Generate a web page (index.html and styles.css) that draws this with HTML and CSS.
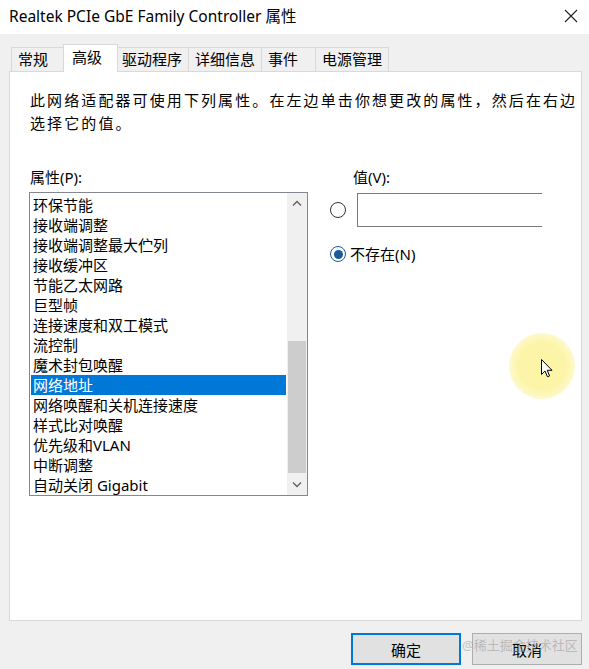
FILE: index.html
```
<!DOCTYPE html>
<html>
<head>
<meta charset="utf-8">
<title>Realtek PCIe GbE Family Controller 属性</title>
<link rel="stylesheet" href="styles.css">
</head>
<body>
<div class="window">
	<div class="titlebar">
		<span class="title">Realtek PCIe GbE Family Controller 属性</span>
		<svg class="close" width="14" height="14" viewBox="0 0 14 14"><path d="M1 1 L13 13 M13 1 L1 13" stroke="#222" stroke-width="1.1" fill="none"/></svg>
	</div>

	<div class="tabs">
		<div class="tab">常规</div>
		<div class="tab selected">高级</div>
		<div class="tab">驱动程序</div>
		<div class="tab">详细信息</div>
		<div class="tab">事件</div>
		<div class="tab">电源管理</div>
	</div>

	<div class="panel">
		<p class="desc">此网络适配器可使用下列属性。在左边单击你想更改的属性，然后在右边<br>选择它的值。</p>

		<div class="props">
			<div class="col-left">
				<div class="label">属性(P):</div>
				<div class="listbox">
					<ul class="items">
						<li>环保节能</li>
						<li>接收端调整</li>
						<li>接收端调整最大伫列</li>
						<li>接收缓冲区</li>
						<li>节能乙太网路</li>
						<li>巨型帧</li>
						<li>连接速度和双工模式</li>
						<li>流控制</li>
						<li>魔术封包唤醒</li>
						<li class="active">网络地址</li>
						<li>网络唤醒和关机连接速度</li>
						<li>样式比对唤醒</li>
						<li>优先级和VLAN</li>
						<li>中断调整</li>
						<li>自动关闭 Gigabit</li>
					</ul>
					<div class="scrollbar">
						<div class="arrow"><svg width="10" height="6" viewBox="0 0 10 6"><path d="M1 5.5 L5 1.5 L9 5.5" stroke="#606060" stroke-width="1.3" fill="none"/></svg></div>
						<div class="track"><div class="thumb"></div></div>
						<div class="arrow"><svg width="10" height="6" viewBox="0 0 10 6"><path d="M1 0.5 L5 4.5 L9 0.5" stroke="#606060" stroke-width="1.3" fill="none"/></svg></div>
					</div>
				</div>
			</div>

			<div class="col-right">
				<div class="label value-label">值(V):</div>
				<div class="value-row">
					<span class="radio"></span>
					<div class="textbox"></div>
				</div>
				<div class="radio-row">
					<span class="radio checked"></span>
					<span>不存在(N)</span>
				</div>
			</div>
		</div>
	</div>

	<div class="buttons">
		<button class="btn default">确定</button>
		<button class="btn">取消</button>
	</div>

	<!-- screen recorder overlays -->
	<div class="glow"></div>
	<svg class="cursor" width="12" height="19" viewBox="0 0 12 19"><path d="M0.5 0.5 L0.5 15.5 L4 12 L6.5 17.8 L8.6 16.9 L6.2 11.3 L11 11.3 Z" fill="#fff" stroke="#000" stroke-width="1"/></svg>
	<div class="watermark">@稀土掘金技术社区</div>
</div>
</body>
</html>
```

FILE: styles.css
```
	body{
		margin:0;
		background:#f0f0f0;
		font-family:"Noto Sans", "Noto Sans CJK SC", sans-serif;
		font-size:15px;
		color:#000;
	}
	.window{
		position:relative;
		width:589px;
		height:669px;
		overflow:hidden;
	}
	.titlebar{
		height:34px;
		background:#fff;
		display:flex;
		align-items:center;
		justify-content:space-between;
		padding:0 11px 2px 9px;
		box-sizing:border-box;
	}
	.title{
		font-size:15.5px;
		line-height:20px;
	}
	.close{
		display:block;
	}

	/* tab strip */
	.tabs{
		display:flex;
		align-items:flex-end;
		height:27px;
		margin-top:10px;
		padding-left:11px;
		position:relative;
		z-index:1;
	}
	.tab{
		height:24px;
		line-height:23px;
		min-width:55px;
		padding:0 6px;
		box-sizing:border-box;
		border:1px solid #d9d9d9;
		border-bottom:none;
		margin-left:-1px;
		background:#f0f0f0;
	}
	.tab:first-child{
		margin-left:0;
	}
	.tab.selected{
		height:28px;
		margin:0 -2px -1px -3px;
		padding:0 8px;
		line-height:25px;
		background:#fff;
		position:relative;
		z-index:2;
	}

	/* white property page */
	.panel{
		margin:0 7px 0 9px;
		height:550px;
		box-sizing:border-box;
		border:1px solid #d9d9d9;
		background:#fff;
		padding:17px 0 0 19px;
	}
	.desc{
		margin:0 0 0 1px;
		line-height:23px;
		letter-spacing:2.1px;
		white-space:nowrap;
	}
	.props{
		display:flex;
		gap:22px;
		margin-top:32px;
	}
	.label{
		line-height:20px;
		margin-left:1px;
	}
	.col-left{
		width:279px;
	}

	/* list box */
	.listbox{
		margin-top:5px;
		height:304px;
		box-sizing:border-box;
		border:1px solid #828790;
		display:flex;
	}
	.items{
		list-style:none;
		margin:0;
		padding:2px 1px 0 1px;
		flex:1;
	}
	.items li{
		height:20px;
		line-height:20px;
		padding-left:2px;
		white-space:nowrap;
	}
	.items li.active{
		background:#0078d7;
		color:#fff;
	}
	.scrollbar{
		width:20px;
		background:#f0f0f0;
		display:flex;
		flex-direction:column;
	}
	.arrow{
		height:20px;
		display:flex;
		align-items:center;
		justify-content:center;
	}
	.track{
		flex:1;
	}
	.thumb{
		margin:128px 1px 0 1px;
		height:132px;
		background:#cdcdcd;
	}

	/* value side */
	.col-right{
		flex:1;
	}
	.value-label{
		margin-left:23px;
	}
	.value-row{
		display:flex;
		align-items:center;
		gap:11px;
		margin-top:6px;
	}
	.textbox{
		width:185px;
		height:34px;
		box-sizing:border-box;
		border:1px solid #7a7a7a;
		border-right:none;
	}
	.radio{
		width:16px;
		height:16px;
		box-sizing:border-box;
		border:1px solid #333;
		border-radius:50%;
		background:#fff;
		display:flex;
		align-items:center;
		justify-content:center;
		flex:none;
	}
	.radio.checked{
		border-color:#1c5a9a;
	}
	.radio.checked:after{
		content:"";
		width:9px;
		height:9px;
		border-radius:50%;
		background:#1c5a9a;
	}
	.radio-row{
		display:flex;
		align-items:center;
		gap:4px;
		margin-top:17px;
		line-height:20px;
	}

	/* dialog buttons */
	.buttons{
		display:flex;
		justify-content:flex-end;
		gap:11px;
		margin-top:12px;
		padding-right:7px;
	}
	.btn{
		width:110px;
		height:32px;
		box-sizing:border-box;
		border:1px solid #adadad;
		background:#e1e1e1;
		font-family:"Noto Sans", "Noto Sans CJK SC", sans-serif;
		font-size:15px;
		color:#000;
		padding:0;
	}
	.btn.default{
		border:2px solid #0078d7;
	}

	/* overlays from the screen recording */
	.glow{
		position:absolute;
		left:509px;
		top:333px;
		width:66px;
		height:66px;
		border-radius:50%;
		background:radial-gradient(circle, #fcf5a6 0%, #fcf5a8 50%, rgba(252,245,168,0.55) 72%, rgba(252,245,168,0) 100%);
	}
	.cursor{
		position:absolute;
		left:541px;
		top:359px;
	}
	.watermark{
		position:absolute;
		left:462px;
		top:635px;
		font-size:13px;
		line-height:20px;
		color:rgba(150,150,150,0.55);
	}
```
